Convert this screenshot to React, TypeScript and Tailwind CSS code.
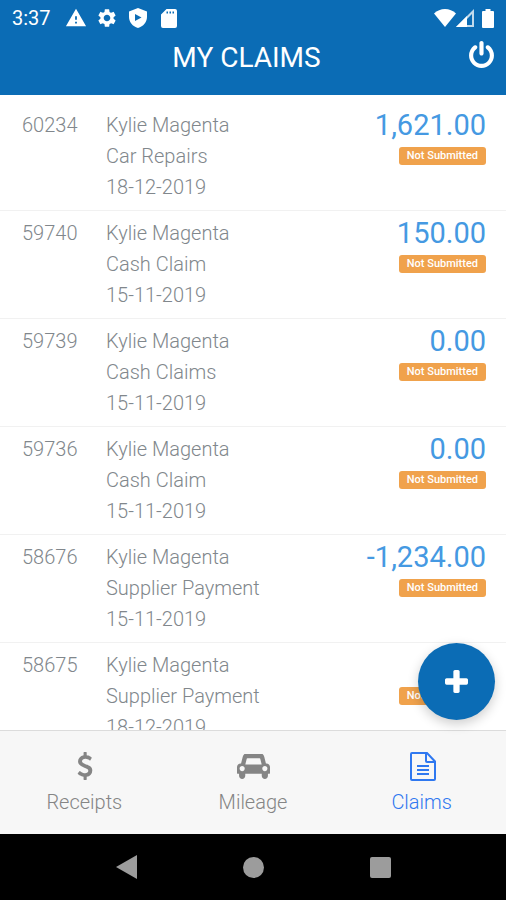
import { MdSettings, MdWarning } from "react-icons/md";

type Claim = {
  id: string;
  name: string;
  description: string;
  date: string;
  amount: string;
};

const claims: Claim[] = [
  { id: "60234", name: "Kylie Magenta", description: "Car Repairs", date: "18-12-2019", amount: "1,621.00" },
  { id: "59740", name: "Kylie Magenta", description: "Cash Claim", date: "15-11-2019", amount: "150.00" },
  { id: "59739", name: "Kylie Magenta", description: "Cash Claims", date: "15-11-2019", amount: "0.00" },
  { id: "59736", name: "Kylie Magenta", description: "Cash Claim", date: "15-11-2019", amount: "0.00" },
  { id: "58676", name: "Kylie Magenta", description: "Supplier Payment", date: "15-11-2019", amount: "-1,234.00" },
  { id: "58675", name: "Kylie Magenta", description: "Supplier Payment", date: "18-12-2019", amount: "0.00" },
];

function ShieldPlayIcon() {
  return (
    <svg viewBox="0 0 18 20" className="h-5 w-[18px]" fill="currentColor" aria-hidden="true">
      <path
        fillRule="evenodd"
        d="M9 0 18 3.6V9c0 5-3.6 9.400-9 11C3.600 18.400 0 14 0 9V3.600ZM6 6v7L12.500 9.500Z"
      />
    </svg>
  );
}

function SdCardIcon() {
  return (
    <svg viewBox="0 0 16 19" className="h-[19px] w-4" fill="currentColor" aria-hidden="true">
      <path
        fillRule="evenodd"
        d="M5.500 0H14a2 2 0 0 1 2 2v15a2 2 0 0 1-2 2H2a2 2 0 0 1-2-2V5.500ZM5.500 2.500v2h1.500v-2ZM8.500 2.500v2H10v-2ZM11.500 2.500v2H13v-2Z"
      />
    </svg>
  );
}

function WifiIcon() {
  return (
    <svg viewBox="0 0 22 18" className="h-[18px] w-[22px]" fill="currentColor" aria-hidden="true">
      <path d="M11 18 0 4.500C3 1.500 7 0 11 0s8 1.500 11 4.500Z" />
    </svg>
  );
}

function SignalIcon() {
  return (
    <svg viewBox="0 0 18 18" className="size-[18px]" aria-hidden="true">
      <path d="M18 0v18H0Z" fill="#fff" fillOpacity=".75" />
      <path d="M16 5v11h-5v-6Z" fill="#0b6cb5" />
      <path d="M11 7v11H0Z" fill="#fff" />
    </svg>
  );
}

function BatteryIcon() {
  return (
    <svg viewBox="0 0 12 19" className="h-[19px] w-3" fill="currentColor" aria-hidden="true">
      <path d="M3.500 0h5v2H11a1 1 0 0 1 1 1v15a1 1 0 0 1-1 1H1a1 1 0 0 1-1-1V3a1 1 0 0 1 1-1h2.500Z" />
    </svg>
  );
}

function PowerIcon() {
  return (
    <svg viewBox="128 0 1536 1664" className="h-[27px] w-[25px]" fill="currentColor" aria-hidden="true">
      <path d="M1664 896q0 156-61 298t-164 245-245 164-298 61-298-61-245-164-164-245-61-298q0-182 80.500-343t226.500-270q43-32 95.500-25t83.500 50q32 42 24.500 94.500t-49.500 84.500q-98 74-151.500 181t-53.500 228q0 104 40.500 198.500t109.500 163.500 163.500 109.500 198.500 40.500 198.500-40.500 163.500-109.500 109.500-163.500 40.500-198.500q0-121-53.500-228t-151.500-181q-42-32-49.500-84.500t24.500-94.500q31-43 84-50t95 25q146 109 226.500 270t80.500 343zm-640-768v640q0 52-38 90t-90 38-90-38-38-90v-640q0-52 38-90t90-38 90 38 38 90z" />
    </svg>
  );
}

function PlusIcon() {
  return (
    <svg viewBox="192 128 1408 1408" className="size-[23px]" fill="currentColor" aria-hidden="true">
      <path d="M1600 736v192q0 40-28 68t-68 28h-416v416q0 40-28 68t-68 28h-192q-40 0-68-28t-28-68v-416h-416q-40 0-68-28t-28-68v-192q0-40 28-68t68-28h416v-416q0-40 28-68t68-28h192q40 0 68 28t28 68v416h416q40 0 68 28t28 68z" />
    </svg>
  );
}

function DollarIcon() {
  return (
    <svg viewBox="0 0 1024 1792" className="h-7 w-4" fill="currentColor" aria-hidden="true">
      <path d="M978 1185q0 153-99.5 263.5t-258.5 136.500v175q0 14-9 23t-23 9h-135q-13 0-22.500-9.500t-9.500-22.500v-175q-66-9-127.500-31t-101.500-44.500-74-48-46.500-37.500-17.500-18q-17-21-2-41l103-135q7-10 23-12 15-2 24 9l2 2q113 99 243 125 37 8 74 8 81 0 142.500-43t61.500-122q0-28-15-53t-33.500-42-58.500-37.500-66-32-80-32.500q-39-16-61.500-25t-61.500-26.500-62.500-31-56.500-35.500-53.500-42.500-43.500-49-35.500-58-21-66.500-8.500-78q0-138 98-242t255-134v-180q0-13 9.500-22.500t22.500-9.500h135q14 0 23 9t9 23v176q57 6 110.500 23t87 33.500 63.500 37.500 39 29 15 14q17 18 5 38l-81 146q-8 15-23 16-14 3-27-7-3-3-14.500-12t-39-26.500-58.500-32-74.500-26-85.500-11.500q-95 0-155 43t-60 111q0 26 8.500 48t29.500 41.500 39.500 33 56 31 60.500 27 70 27.500q53 20 81 31.500t76 35 75.500 42.500 62 50 53 63.500 31.500 76.500 13 94z" />
    </svg>
  );
}

function CarIcon() {
  return (
    <svg viewBox="0 0 2048 1536" className="h-[25px] w-[33px]" fill="currentColor" aria-hidden="true">
      <path d="M480 896q0-66-47-113t-113-47-113 47-47 113 47 113 113 47 113-47 47-113zm36-256h1016l-89-357q-2-8-14-17.500t-21-9.500h-768q-9 0-21 9.500t-14 17.500zm1372 256q0-66-47-113t-113-47-113 47-47 113 47 113 113 47 113-47 47-113zm160-96v384q0 14-9 23t-23 9h-96v128q0 80-56 136t-136 56-136-56-56-136v-128h-1024v128q0 80-56 136t-136 56-136-56-56-136v-128h-96q-14 0-23-9t-9-23v-384q0-93 65.500-158.500t158.500-65.500h28l105-419q23-94 104-157.500t179-63.500h768q98 0 179 63.500t104 157.500l105 419h28q93 0 158.500 65.500t65.500 158.500z" />
    </svg>
  );
}

function DocumentIcon() {
  return (
    <svg viewBox="0 0 26 29" className="h-[29px] w-[26px]" fill="none" stroke="currentColor" strokeWidth="2" aria-hidden="true">
      <path d="M2 1h15L25 9.500V27a1 1 0 0 1-1 1H2a1 1 0 0 1-1-1V2a1 1 0 0 1 1-1Z" />
      <path d="M16 1v8a1 1 0 0 0 1 1h8" />
      <path d="M7 14h12M7 18h12M7 22h12" />
    </svg>
  );
}

const tabs = [
  { label: "Receipts", icon: <DollarIcon />, active: false },
  { label: "Mileage", icon: <CarIcon />, active: false },
  { label: "Claims", icon: <DocumentIcon />, active: true },
];

function StatusBar() {
  return (
    <div className="flex h-9 items-center justify-between px-3 text-xl">
      <div className="flex items-center">
        <span>3:37</span>
        <MdWarning className="ml-[14px] size-[22px]" />
        <MdSettings className="ml-[9px] size-[22px]" />
        <span className="ml-[11px]">
          <ShieldPlayIcon />
        </span>
        <span className="ml-[14px]">
          <SdCardIcon />
        </span>
      </div>
      <div className="flex items-center">
        <WifiIcon />
        <SignalIcon />
        <span className="ml-2">
          <BatteryIcon />
        </span>
      </div>
    </div>
  );
}

function ClaimRow({ claim }: { claim: Claim }) {
  return (
    <li className="flex border-b border-[#f1f1f1] px-5 py-[7px] text-xl leading-[31px] font-light text-[#81878c]">
      <span className="w-[86px] shrink-0 pl-0.5">{claim.id}</span>
      <div className="min-w-0 flex-1">
        <p>{claim.name}</p>
        <p>{claim.description}</p>
        <p>{claim.date}</p>
      </div>
      <div className="flex flex-col items-end">
        <span className="text-[29px] leading-[31px] font-normal text-[#4599e2]">{claim.amount}</span>
        <span className="mt-[6px] rounded-[3px] bg-[#f0a24c] px-2 text-[11px] leading-[18px] font-medium text-white">
          Not Submitted
        </span>
      </div>
    </li>
  );
}

export default function App() {
  return (
    <div className="flex h-screen flex-col overflow-hidden bg-white font-[Roboto,'Liberation_Sans',sans-serif]">
      <header className="shrink-0 bg-[#0b6cb5] text-white">
        <StatusBar />
        <div className="flex h-[59px] items-start pr-3 pl-6">
          <h1 className="flex-1 text-center text-[28px] leading-[43px]">MY CLAIMS</h1>
          <button type="button" aria-label="Log out" className="mt-[5px]">
            <PowerIcon />
          </button>
        </div>
      </header>

      <main className="relative min-h-0 flex-1">
        <ul className="h-full overflow-hidden pt-2">
          {claims.map((claim) => (
            <ClaimRow key={claim.id} claim={claim} />
          ))}
        </ul>
        <button
          type="button"
          aria-label="Add claim"
          className="absolute right-[11px] bottom-[10px] flex size-[77px] items-center justify-center rounded-full bg-[#0b6cb5] text-white shadow-[0_4px_12px_rgba(0,0,0,0.2)]"
        >
          <PlusIcon />
        </button>
      </main>

      <nav className="grid h-[104px] shrink-0 grid-cols-3 border-t border-[#dcdcdc] bg-[#f7f7f7]">
        {tabs.map((tab) => (
          <a
            key={tab.label}
            href={`#${tab.label.toLowerCase()}`}
            className={
              tab.active
                ? "flex flex-col items-center pt-[15px] text-[#2f78f0]"
                : "flex flex-col items-center pt-[15px] text-[#858585]"
            }
          >
            <span className="flex h-10 items-center pl-0.5">{tab.icon}</span>
            <span className="text-xl leading-8 font-light">{tab.label}</span>
          </a>
        ))}
      </nav>

      <div className="flex h-[66px] shrink-0 items-center justify-center gap-[106px] bg-black text-[#9c9c9c]">
        <button type="button" aria-label="Back">
          <svg viewBox="0 0 21 24" className="h-6 w-[21px]" fill="currentColor">
            <path d="M21 0v24L0 12Z" />
          </svg>
        </button>
        <button type="button" aria-label="Home" className="size-[21px] rounded-full bg-[#9c9c9c]" />
        <button type="button" aria-label="Overview" className="size-[21px] rounded-xs bg-[#9c9c9c]" />
      </div>
    </div>
  );
}
